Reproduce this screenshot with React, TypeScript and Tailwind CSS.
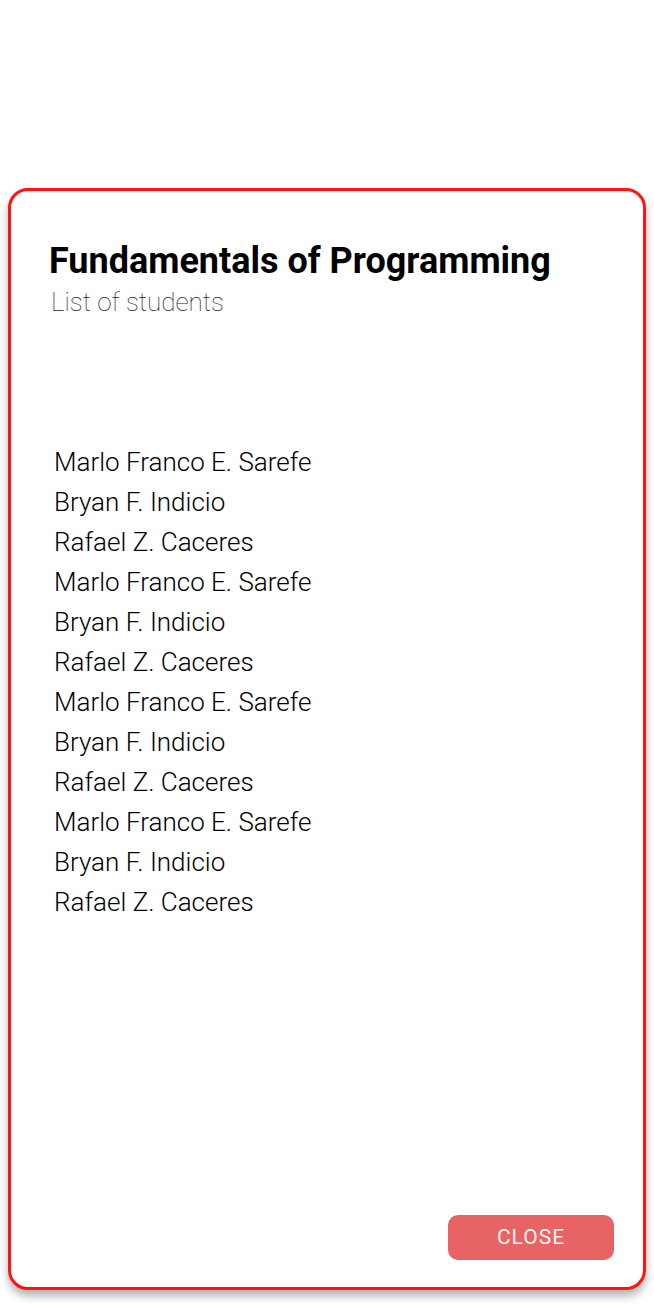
const students = [
  'Marlo Franco E. Sarefe',
  'Bryan F. Indicio',
  'Rafael Z. Caceres',
  'Marlo Franco E. Sarefe',
  'Bryan F. Indicio',
  'Rafael Z. Caceres',
  'Marlo Franco E. Sarefe',
  'Bryan F. Indicio',
  'Rafael Z. Caceres',
  'Marlo Franco E. Sarefe',
  'Bryan F. Indicio',
  'Rafael Z. Caceres',
];

export default function App() {
  return (
    <div className="w-[654px] h-[1306px] bg-white font-['Roboto',sans-serif] pt-[188px] px-[8px]">
      <div className="h-[1102px] flex flex-col border-[3px] border-[#ff1414] rounded-[20px] bg-white shadow-[0_6px_8px_rgba(0,0,0,0.3)] pl-[38px] pr-[29px] pt-[50px] pb-[27px]">
        <h1 className="text-[36px] leading-[40px] font-bold text-black">Fundamentals of Programming</h1>
        <p className="text-[26px] leading-[30px] font-thin text-[#222] ml-[2px] mt-[6px]">List of students</p>

        <ul className="mt-[125px] ml-[5px]">
          {students.map((name, i) => (
            <li key={i} className="text-[26px] leading-[40px] font-light text-black">
              {name}
            </li>
          ))}
        </ul>

        <div className="mt-auto flex justify-end">
          <button className="w-[166px] h-[45px] rounded-[10px] bg-[#e86464] text-[#fff3f3] text-[21px] tracking-[1px] font-normal">
            CLOSE
          </button>
        </div>
      </div>
    </div>
  );
}
